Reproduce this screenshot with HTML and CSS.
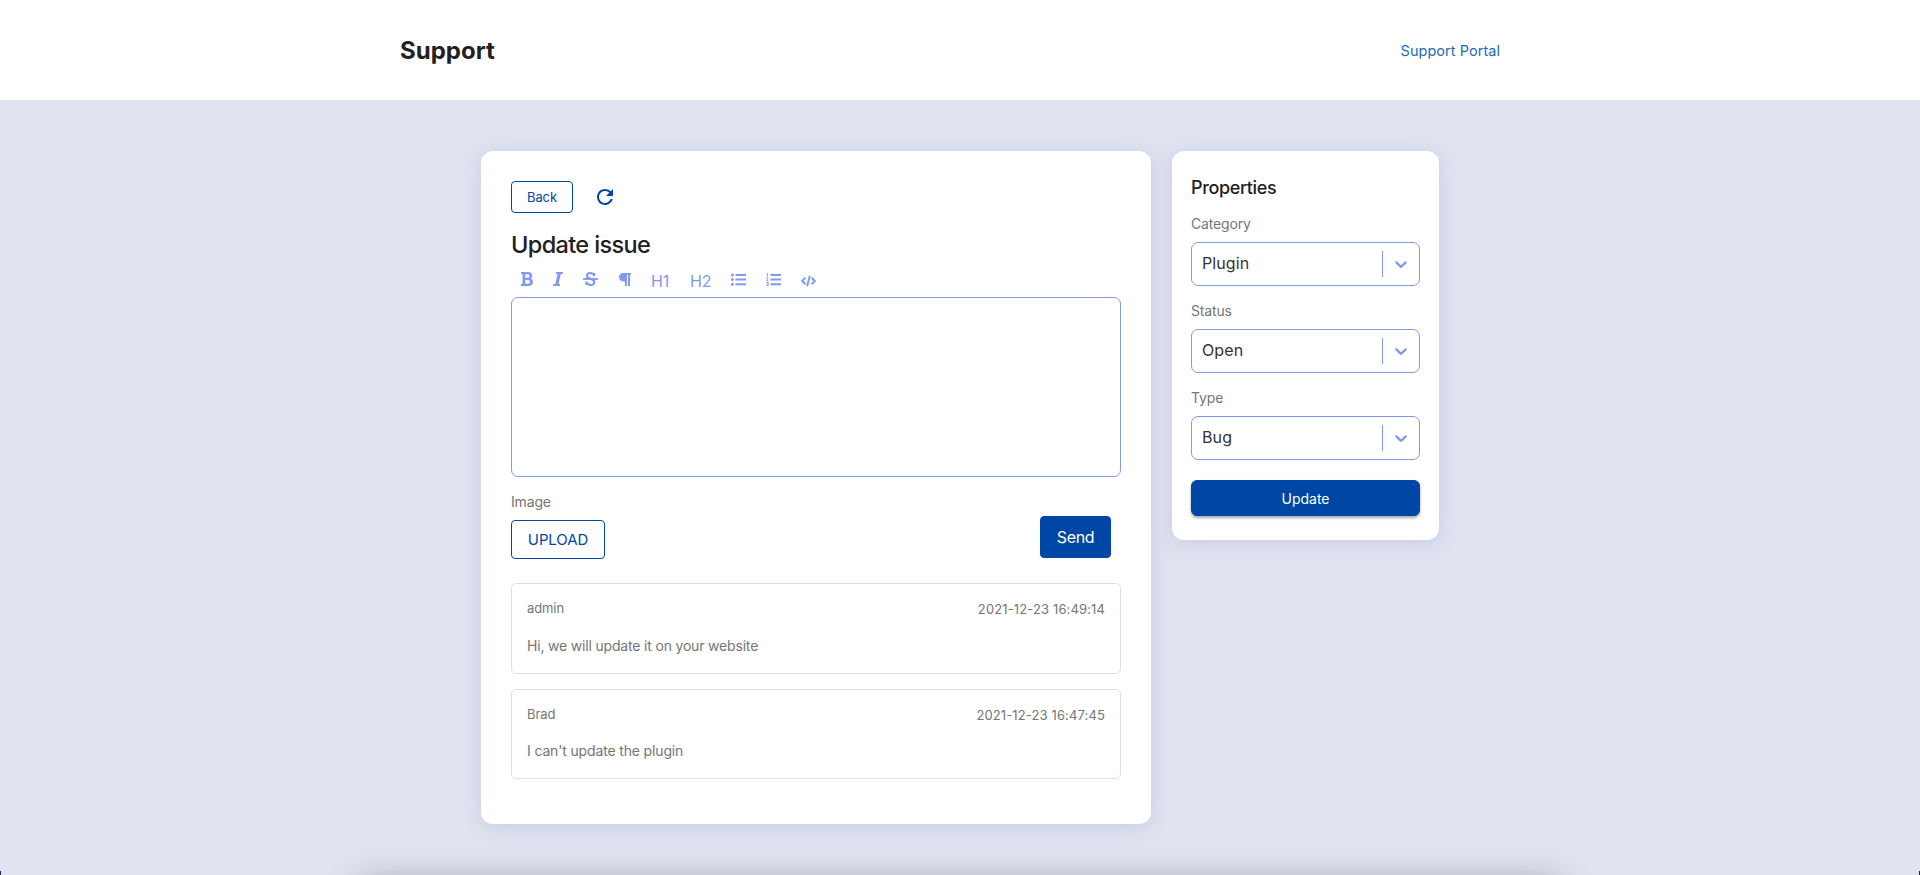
FILE: index.html
```html
<!DOCTYPE html>
<html lang="en">
<head>
<meta charset="utf-8">
<title>Support</title>
<link rel="stylesheet" href="styles.css">
</head>
<body>
<header class="header">
  <div class="header-inner">
    <h1 class="brand">Support</h1>
    <a class="portal">Support Portal</a>
  </div>
</header>
<main class="layout">
  <section class="card main">
    <div class="top">
      <button class="btn back">Back</button>
      <svg class="refresh" viewBox="0 0 24 24"><path d="M17.65 6.35C16.2 4.9 14.21 4 12 4c-4.42 0-7.99 3.58-7.99 8s3.57 8 7.99 8c3.73 0 6.84-2.55 7.73-6h-2.08c-.82 2.33-3.04 4-5.65 4-3.31 0-6-2.69-6-6s2.69-6 6-6c1.66 0 3.14.69 4.22 1.78L13 11h7V4l-2.350 2.350z"/></svg>
    </div>
    <h2 class="title">Update issue</h2>
    <div class="toolbar">
      <svg class="t-bold" viewBox="0 0 12 14"><path fill-rule="evenodd" d="M0 0h7c2.700 0 4.300 1.400 4.300 3.700 0 1.400-.7 2.400-1.800 2.900 1.500.5 2.400 1.600 2.400 3.300 0 2.600-1.800 4.100-4.700 4.100H0v-2h1.500V2H0zM4.300 2.200v3.500h2.200c1.300 0 2-.6 2-1.800S7.800 2.200 6.500 2.200zM4.300 7.900v3.900h2.500c1.400 0 2.200-.7 2.200-2s-.8-1.900-2.200-1.900z"/></svg>
      <svg class="t-italic" viewBox="0 0 10 14"><path d="M3.200 0H10L9.700 2H7.800L5.500 12h1.700l-.4 2H0l.4-2h1.900L4.600 2H2.800z"/></svg>
      <svg class="t-strike" viewBox="0 0 15 14"><path d="M0 6.100h15v1.800H0z"/><path class="line" d="M11.300 4.300V1M11.100 3.700C10.600 2 9.400 1.100 7.400 1.100 5.200 1.100 3.900 2.200 3.900 3.700c0 1.700 1.600 2.400 3.600 3.100s3.900 1.400 3.900 3.200c0 1.800-1.500 2.900-3.800 2.900-2.300 0-3.700-1.100-4.100-2.900M3.400 9.500V13"/></svg>
      <svg class="t-para" viewBox="0 0 12 13"><path d="M4.500 0H12v1.800h-1V13H9V1.800H7.900V13H5.900V8.600H4.500C2 8.600 0 6.800 0 4.300S2 0 4.500 0z"/></svg>
      <span class="t-h1">H1</span>
      <span class="t-h2">H2</span>
      <svg class="t-ul" viewBox="0 0 15 13"><path d="M4.500 1H15v2H4.500zM4.500 5.600H15v2H4.500zM4.500 10.200H15v2H4.500z"/><circle cx="1.400" cy="2" r="1.500"/><circle cx="1.400" cy="6.600" r="1.500"/><circle cx="1.400" cy="11.200" r="1.500"/></svg>
      <svg class="t-ol" viewBox="0 0 15 13"><path d="M4.500 1H15v2H4.500zM4.500 5.600H15v2H4.500zM4.500 10.200H15v2H4.500z"/><path class="thin" d="M.3.500h1.200v3.200M.2 5h2L.5 7.700h2M.2 9.500h2v3H.2M.8 11h1.400"/></svg>
      <svg class="t-code" viewBox="0 0 15 12"><path class="line" d="M4.300 2.800L1.200 6l3.100 3.200M10.700 2.800L13.800 6l-3.100 3.200M8.900.8L6.100 11.200"/></svg>
    </div>
    <div class="editor"></div>
    <div class="actions">
      <div class="attach">
        <label class="label image">Image</label>
        <button class="btn upload">UPLOAD</button>
      </div>
      <button class="btn send">Send</button>
    </div>
    <article class="comment">
      <div class="meta"><span>admin</span><time>2021-12-23 16:49:14</time></div>
      <p>Hi, we will update it on your website</p>
    </article>
    <article class="comment second">
      <div class="meta"><span>Brad</span><time>2021-12-23 16:47:45</time></div>
      <p>I can't update the plugin</p>
    </article>
  </section>
  <aside class="card props">
    <h3 class="props-title">Properties</h3>
    <label class="label field">Category</label>
    <div class="select"><span>Plugin</span><svg class="chevron" viewBox="0 0 20 20"><path d="M4.516 7.548c.436-.446 1.043-.481 1.576 0L10 11.295l3.908-3.747c.533-.481 1.141-.446 1.574 0 .436.445.408 1.197 0 1.615-.406.418-4.695 4.502-4.695 4.502a1.095 1.095 0 0 1-1.576 0S4.924 9.581 4.516 9.163s-.436-1.170 0-1.615z"/></svg></div>
    <label class="label field">Status</label>
    <div class="select"><span>Open</span><svg class="chevron" viewBox="0 0 20 20"><path d="M4.516 7.548c.436-.446 1.043-.481 1.576 0L10 11.295l3.908-3.747c.533-.481 1.141-.446 1.574 0 .436.445.408 1.197 0 1.615-.406.418-4.695 4.502-4.695 4.502a1.095 1.095 0 0 1-1.576 0S4.924 9.581 4.516 9.163s-.436-1.170 0-1.615z"/></svg></div>
    <label class="label field">Type</label>
    <div class="select"><span>Bug</span><svg class="chevron" viewBox="0 0 20 20"><path d="M4.516 7.548c.436-.446 1.043-.481 1.576 0L10 11.295l3.908-3.747c.533-.481 1.141-.446 1.574 0 .436.445.408 1.197 0 1.615-.406.418-4.695 4.502-4.695 4.502a1.095 1.095 0 0 1-1.576 0S4.924 9.581 4.516 9.163s-.436-1.170 0-1.615z"/></svg></div>
    <button class="btn update">Update</button>
  </aside>
</main>
<div class="dock-shadow"></div>
<i class="corner left"></i><i class="corner right"></i>
</body>
</html>
```

FILE: styles.css
```css
* { box-sizing: border-box; }
body {
  margin: 0;
  height: 875px;
  position: relative;
  overflow: hidden;
  background: #e0e4f0;
  color: #212121;
  font-family: Inter, "Liberation Sans", sans-serif;
}
h1, h2, h3, p { margin: 0; }
.header { height: 100px; background: #fff; }
.header-inner {
  width: 1120px;
  height: 100px;
  margin: 0 auto;
  padding-right: 20px;
  display: flex;
  align-items: center;
  justify-content: space-between;
}
.brand { font-size: 24px; line-height: 32px; font-weight: 700; padding-top: 2px; }
.portal { font-size: 14.500px; letter-spacing: 0.04px; color: #1f6ab8; }
.layout { display: flex; align-items: flex-start; gap: 21px; padding: 51px 0 0 481px; }
.card { background: #fff; border-radius: 12px; box-shadow: 0 3px 20px rgba(140, 145, 210, .3); }
.main { width: 670px; height: 673px; padding: 30px; }
.top { display: flex; align-items: center; gap: 20px; height: 32px; }
.btn {
  font-family: inherit;
  color: #0047a5;
  background: #fff;
  border: 1px solid #0047a5;
  border-radius: 4px;
  padding: 0;
  display: flex;
  align-items: center;
  justify-content: center;
}
.back { width: 62px; height: 32px; font-size: 13px; letter-spacing: -0.1px; padding-bottom: 1px; }
.refresh { width: 24px; height: 24px; fill: #0047a5; margin-top: -1px; }
.title { font-size: 23.500px; font-weight: 500; line-height: 30px; margin-top: 17px; letter-spacing: -0.64px; }
.toolbar { display: flex; height: 37px; padding: 12px 0 0 10px; color: #8299ec; align-items: flex-start; }
.toolbar svg { fill: #8299ec; flex: none; overflow: visible; }
.toolbar .line { fill: none; stroke: #8299ec; stroke-width: 2; }
.toolbar .thin { fill: none; stroke: #8299ec; stroke-width: .9; }
.toolbar span { font-size: 16px; line-height: 20px; margin-top: -1px; letter-spacing: -0.2px; }
.t-bold { width: 12px; height: 14px; }
.t-italic { width: 10px; height: 14px; margin-left: 20px; }
.t-strike { width: 15px; height: 14px; margin-left: 20px; }
.t-para { width: 12px; height: 13px; margin: 1px 0 0 21px; }
.t-h1 { width: 19px; margin-left: 20px; }
.t-h2 { width: 21px; margin-left: 20px; }
.t-ul { width: 15px; height: 13px; margin: 1px 0 0 20px; }
.t-ol { width: 15px; height: 13px; margin: 1px 0 0 20px; }
.t-code { width: 15px; height: 12px; margin: 3px 0 0 20px; }
.editor { height: 180px; border: 1px solid #8299ec; border-radius: 7px; }
.actions { display: flex; justify-content: space-between; height: 106px; padding-right: 10px; }
.label { display: block; font-size: 14px; line-height: 20px; letter-spacing: -0.15px; color: #757575; }
.image { margin-top: 15px; }
.upload { width: 94px; height: 39px; margin-top: 8px; font-size: 15px; letter-spacing: -0.1px; }
.send { width: 71px; height: 42px; margin-top: 39px; font-size: 16px; letter-spacing: -0.35px; background: #0047a5; color: #fff; }
.comment { height: 91px; border: 1px solid #e0e0e0; border-radius: 5px; padding: 15px; color: #757575; font-size: 14px; line-height: 20px; }
.second { margin-top: 15px; height: 90px; }
.meta { display: flex; justify-content: space-between; font-size: 13px; line-height: 18px; letter-spacing: -0.1px; }
.meta time { padding-top: 1px; letter-spacing: 0.13px; }
.comment p { margin-top: 18px; letter-spacing: -0.18px; }
.comment.second p { margin-top: 17px; letter-spacing: -0.15px; }
.props { width: 267px; height: 389px; padding: 26px 19px; }
.props-title { font-size: 18px; line-height: 22px; font-weight: 500; letter-spacing: -0.36px; }
.field { margin-top: 15px; }
.select {
  display: flex;
  align-items: center;
  justify-content: space-between;
  height: 44px;
  margin-top: 8px;
  border: 1px solid #8299ec;
  border-radius: 7px;
  padding: 0 0 0 10px;
  font-size: 16px;
  letter-spacing: 0.1px;
  color: #333;
}
.select span { padding-bottom: 2px; }
.chevron { width: 37px; height: 26px; padding: 3px 8px; border-left: 1px solid #8299ec; fill: #8299ec; }
.update { width: 229px; height: 36px; margin-top: 20px; border-radius: 6px; background: #0047a5; color: #fff; font-size: 14px; box-shadow: 0 2px 3px rgba(0, 0, 0, .35); }
.dock-shadow { position: absolute; left: 372px; bottom: 0; width: 1176px; height: 1px; background: #cbced8; box-shadow: 0 20px 34px 12px rgba(60, 65, 60, .42); }
.corner { position: absolute; bottom: 0; width: 1px; height: 4px; background: #2d1b69; }
.left { left: 0; }
.right { right: 0; }
```
